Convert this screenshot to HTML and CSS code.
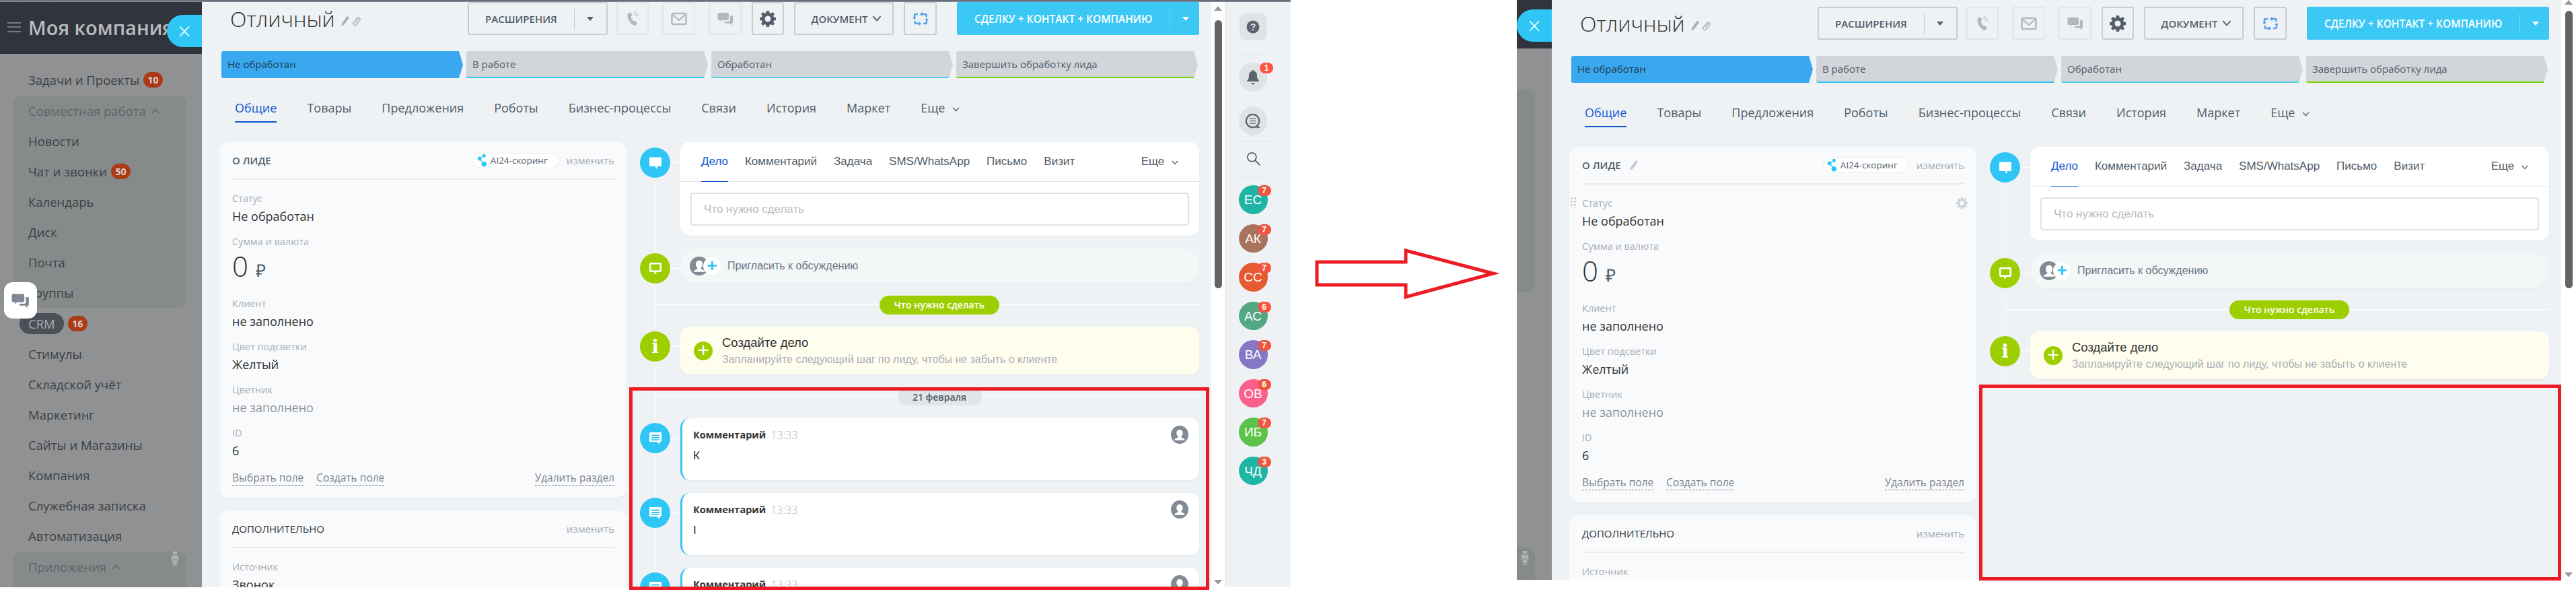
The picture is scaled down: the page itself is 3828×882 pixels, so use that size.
FILE: index.html
```html
<!DOCTYPE html>
<html lang="ru">
<head>
  <meta charset="UTF-8">
  <title>Лид: до и после</title>
  <link rel="stylesheet" href="styles.css">
</head>
<body>
  <svg class="sprite" xmlns="http://www.w3.org/2000/svg">
    <symbol id="i-phone" viewBox="0 0 24 24"><path d="M6 3.5l3-1.5 2.6 5-2 1.6c.3 2.6 1.9 5.4 4 7l2.3-.9 3.3 4.6-2.6 2c-1.700.9-3.600.2-5.100-1.100C7.700 16.800 4.800 12 4.300 7.400 4.100 5.800 4.700 4.300 6 3.500z"/><path d="M13 3.500a7 7 0 0 1 4.500 5M14 .8a10 10 0 0 1 6.300 7" fill="none" stroke="currentColor" stroke-width="1"/></symbol>
    <symbol id="i-mail" viewBox="0 0 24 20"><rect x="1.500" y="2" width="21" height="16" rx="2" fill="none" stroke="currentColor" stroke-width="2.400"/><path d="M3 4l9 8 9-8" fill="none" stroke="currentColor" stroke-width="2.200"/></symbol>
    <symbol id="i-chat" viewBox="0 0 24 24"><path d="M2 3h13a2 2 0 0 1 2 2v7a2 2 0 0 1-2 2H7l-2 3v-3H2a1.500 1.500 0 0 1-1.500-1.500v-8A1.500 1.500 0 0 1 2 3z"/><path d="M19 7h2.500A1.500 1.500 0 0 1 23 8.500V17a1.500 1.500 0 0 1-1.500 1.500H21V22l-3-3.500h-6a1.500 1.500 0 0 1-1.500-1.500v-1H17a2 2 0 0 0 2-2z"/></symbol>
    <symbol id="i-gear" viewBox="0 0 24 24"><path fill-rule="evenodd" d="M10 1h4l.6 3.100 1.900.8L19.200 3 22 5.800l-1.900 2.700.8 1.900L24 11v4l-3.100.6-.8 1.900 1.900 2.700-2.800 2.800-2.700-1.900-1.900.8L14 25h-4l-.6-3.100-1.900-.8L4.800 23 2 20.200l1.900-2.700-.8-1.900L0 15v-4l3.100-.6.8-1.900L2 5.800 4.800 3l2.700 1.900 1.900-.8zM12 8.500a4.500 4.500 0 1 0 0 9 4.500 4.500 0 0 0 0-9z" transform="translate(0 -1)"/></symbol>
    <symbol id="i-sync" viewBox="0 0 24 24"><path d="M3 10V6.500C3 5.500 3.500 5 4.500 5H8M21 14v3.500c0 1-.5 1.500-1.500 1.500H16M14 5h5c1 0 1.500.5 1.500 1.500V9M10 19H5c-1 0-1.500-.5-1.500-1.500V15" fill="none" stroke="currentColor" stroke-width="2.500"/><path d="M.5 10h5L3 13.500zM23.500 14h-5L21 10.500zM14.500 1.500v7L11 5zM9.500 22.500v-7L13 19z"/></symbol>
    <symbol id="i-pencil" viewBox="0 0 14 16"><path d="M10 1l3 2-8 11-3.500 1.500L2 12z"/></symbol>
    <symbol id="i-link" viewBox="0 0 14 16"><path d="M9.500 2.500l2 1.500c1 .8 1 2 .4 2.800l-5.500 7c-.8 1-2 1-2.800.4l-1-.8c-.8-.7-1-1.800-.3-2.700l5-6.500c.5-.6 1.200-.6 1.700-.2s.6 1.100.1 1.700l-4 5.200" fill="none" stroke="currentColor" stroke-width="1.300"/></symbol>
    <symbol id="i-chevron" viewBox="0 0 12 8"><path d="M1 1l5 5.500L11 1" fill="none" stroke="currentColor" stroke-width="1.600"/></symbol>
    <symbol id="i-bubble" viewBox="0 0 20 20"><path d="M2 1.500h16a1 1 0 0 1 1 1V14a1 1 0 0 1-1 1h-4.500L11 19l-1-4H2a1 1 0 0 1-1-1V2.500a1 1 0 0 1 1-1z"/></symbol>
    <symbol id="i-bubble-out" viewBox="0 0 20 20"><path fill-rule="evenodd" d="M3 1h14a2 2 0 0 1 2 2v10a2 2 0 0 1-2 2h-5l-3 4-1-4H3a2 2 0 0 1-2-2V3a2 2 0 0 1 2-2zm.5 2.500v9h13v-9z"/></symbol>
    <symbol id="i-comment" viewBox="0 0 20 20"><path fill-rule="evenodd" d="M2.500 1h15A1.500 1.500 0 0 1 19 2.500v11a1.500 1.500 0 0 1-1.500 1.500H16v4l-4-4H2.500A1.500 1.500 0 0 1 1 13.500v-11A1.500 1.500 0 0 1 2.500 1zM4 4.500V6.500h12v-2zM4 8v2h12V8zm0 3.200v1.800h12v-1.800z"/></symbol>
    <symbol id="i-person" viewBox="0 0 24 24"><path d="M12 5c2.800 0 4.300 2 4.300 4.800 0 2.200-1 3.700-2 4.500v1.300c2 .9 3.600 1.500 4.500 2.700.3.500.2 1-.2 1.200H5.400c-.4-.2-.5-.7-.2-1.200.9-1.200 2.500-1.800 4.500-2.700v-1.300c-1-.8-2-2.300-2-4.500C7.700 7 9.200 5 12 5z"/></symbol>
    <symbol id="i-bell" viewBox="0 0 20 24"><path d="M10 1c1 0 1.500.6 1.500 1.500 3 .8 4.500 3.200 4.500 6.500 0 4 1 6 3 8v1H1v-1c2-2 3-4 3-8 0-3.300 1.500-5.700 4.500-6.500C8.500 1.600 9 1 10 1zM7.500 20h5c0 1.500-1 2.500-2.500 2.500S7.500 21.500 7.500 20z"/></symbol>
    <symbol id="i-talk" viewBox="0 0 26 26"><circle cx="12.500" cy="12.500" r="10.500" fill="none" stroke="currentColor" stroke-width="2.400"/><path d="M20 20l5 3.500-6.500.5z"/><path d="M7.500 9h10M7.500 16.500h10M7.500 12.700h10" fill="none" stroke="currentColor" stroke-width="1.300"/></symbol>
    <symbol id="i-search" viewBox="0 0 24 24"><circle cx="9.500" cy="9.500" r="7.500" fill="none" stroke="currentColor" stroke-width="2"/><path d="M15 15l8 8" fill="none" stroke="currentColor" stroke-width="2.400"/></symbol>
    <symbol id="i-printer" viewBox="0 0 20 40"><rect x="4" y="0" width="12" height="8"/><path d="M2 11h16a2 2 0 0 1 2 2v14h-3v-5H3v5H0V13a2 2 0 0 1 2-2z"/><rect x="4" y="24" width="12" height="10"/><rect x="3" y="36" width="14" height="3"/></symbol>
    <symbol id="i-ai" viewBox="0 0 16 24"><circle cx="4" cy="9" r="3.500"/><circle cx="12" cy="4" r="3"/><circle cx="12" cy="19" r="4.500"/><path d="M4 9l8-5M4 9l8 10" stroke="currentColor" stroke-width="1.500"/></symbol>
  </svg>

  <div class="page">
    <div class="screen screen-full">
      <div class="strip"></div>
      <aside class="sidebar">
        <div class="side-head">
          <span class="burger"></span>
          <span class="side-title">Моя компания</span>
        </div>
        <nav class="side-nav">
          <div class="side-item">Задачи и Проекты <b class="side-badge">10</b></div>
          <div class="side-group">
            <div class="side-item side-item-dim">Совместная работа <svg class="caret-up"><use href="#i-chevron"/></svg></div>
            <div class="side-item">Новости</div>
            <div class="side-item">Чат и звонки <b class="side-badge">50</b></div>
            <div class="side-item">Календарь</div>
            <div class="side-item">Диск</div>
            <div class="side-item">Почта</div>
            <div class="side-item">Группы</div>
          </div>
          <div class="side-item side-item-crm"><span class="crm-pill">CRM</span> <b class="side-badge">16</b></div>
          <div class="side-item">Стимулы</div>
          <div class="side-item">Складской учёт</div>
          <div class="side-item">Маркетинг</div>
          <div class="side-item">Сайты и Магазины</div>
          <div class="side-item">Компания</div>
          <div class="side-item">Служебная записка</div>
          <div class="side-item">Автоматизация</div>
          <div class="side-group side-group-last">
            <div class="side-item side-item-dim">Приложения <svg class="caret-up"><use href="#i-chevron"/></svg></div>
            <svg class="printer"><use href="#i-printer"/></svg>
          </div>
        </nav>
      </aside>

      <main class="panel">
        <button class="close-tab">×</button>
        <div class="top-row">
          <div class="lead-title">Отличный <svg class="title-pencil"><use href="#i-pencil"/></svg><svg class="title-link"><use href="#i-link"/></svg></div>
          <div class="top-btn btn-ext">РАСШИРЕНИЯ<i class="btn-sep"></i><i class="tri"></i></div>
          <div class="top-btn btn-off btn-icon"><svg><use href="#i-phone"/></svg></div>
          <div class="top-btn btn-off btn-icon btn-mail"><svg><use href="#i-mail"/></svg></div>
          <div class="top-btn btn-off btn-icon btn-chat"><svg><use href="#i-chat"/></svg></div>
          <div class="top-btn btn-icon btn-gear"><svg><use href="#i-gear"/></svg></div>
          <div class="top-btn btn-doc">ДОКУМЕНТ <svg><use href="#i-chevron"/></svg></div>
          <div class="top-btn btn-icon btn-sync"><svg><use href="#i-sync"/></svg></div>
          <div class="btn-cta">СДЕЛКУ + КОНТАКТ + КОМПАНИЮ<i class="cta-sep"></i><i class="tri tri-white"></i></div>
        </div>

        <div class="stages">
          <div class="stage stage-active">Не обработан</div>
          <div class="stage stage-blue">В работе</div>
          <div class="stage stage-teal">Обработан</div>
          <div class="stage stage-green">Завершить обработку лида</div>
        </div>

        <div class="tabs">
          <span class="tab tab-active">Общие</span>
          <span class="tab">Товары</span>
          <span class="tab">Предложения</span>
          <span class="tab">Роботы</span>
          <span class="tab">Бизнес-процессы</span>
          <span class="tab">Связи</span>
          <span class="tab">История</span>
          <span class="tab">Маркет</span>
          <span class="tab">Еще <svg class="tab-chevron"><use href="#i-chevron"/></svg></span>
        </div>

        <div class="columns">
          <div class="fields">
            <section class="card">
              <header class="card-head">
                <span class="card-title">О ЛИДЕ</span>
                <span class="ai-chip"><svg><use href="#i-ai"/></svg>AI24-скоринг</span>
                <span class="card-edit">изменить</span>
              </header>
              <div class="field field-first"><label>Статус</label><div class="value">Не обработан</div></div>
              <div class="field"><label>Сумма и валюта</label><div class="value-big">0 <span class="rub">₽</span></div></div>
              <div class="field"><label>Клиент</label><div class="value">не заполнено</div></div>
              <div class="field"><label>Цвет подсветки</label><div class="value">Желтый</div></div>
              <div class="field"><label>Цветник</label><div class="value value-empty">не заполнено</div></div>
              <div class="field"><label>ID</label><div class="value">6</div></div>
              <div class="card-links">
                <span class="dash-link">Выбрать поле</span>
                <span class="dash-link">Создать поле</span>
                <span class="dash-link dash-right">Удалить раздел</span>
              </div>
            </section>
            <section class="card card-extra">
              <header class="card-head">
                <span class="card-title card-title-low">ДОПОЛНИТЕЛЬНО</span>
                <span class="card-edit">изменить</span>
              </header>
              <div class="field field-first"><label>Источник</label><div class="value">Звонок</div></div>
            </section>
          </div>

          <div class="timeline">
            <div class="tl-row">
              <span class="tl-icon tl-blue tl-icon-first"><svg><use href="#i-bubble"/></svg></span>
              <div class="tl-card editor">
                <div class="editor-tabs">
                  <span class="etab etab-active">Дело</span>
                  <span class="etab">Комментарий</span>
                  <span class="etab">Задача</span>
                  <span class="etab">SMS/WhatsApp</span>
                  <span class="etab">Письмо</span>
                  <span class="etab">Визит</span>
                  <span class="etab etab-more">Еще <svg><use href="#i-chevron"/></svg></span>
                </div>
                <div class="editor-input">Что нужно сделать</div>
              </div>
            </div>
            <div class="tl-row">
              <span class="tl-icon tl-green"><svg><use href="#i-bubble-out"/></svg></span>
              <div class="invite">
                <span class="invite-user"><svg><use href="#i-person"/></svg></span><span class="invite-plus">+</span>
                Пригласить к обсуждению
              </div>
            </div>
            <div class="tl-sep tl-sep-todo"><span class="sep-pill pill-green">Что нужно сделать</span></div>
            <div class="tl-row">
              <span class="tl-icon tl-green tl-info">i</span>
              <div class="create">
                <span class="create-plus">+</span>
                <div>
                  <div class="create-title">Создайте дело</div>
                  <div class="create-sub">Запланируйте следующий шаг по лиду, чтобы не забыть о клиенте</div>
                </div>
              </div>
            </div>
            <div class="tl-sep tl-sep-date"><span class="sep-pill pill-date">21 февраля</span></div>
            <div class="tl-row">
              <span class="tl-icon tl-blue"><svg><use href="#i-comment"/></svg></span>
              <div class="comment">
                <div class="comment-head"><b>Комментарий</b> <span class="comment-time">13:33</span><span class="comment-user"><svg><use href="#i-person"/></svg></span></div>
                <div class="comment-text">К</div>
              </div>
            </div>
            <div class="tl-row">
              <span class="tl-icon tl-blue"><svg><use href="#i-comment"/></svg></span>
              <div class="comment">
                <div class="comment-head"><b>Комментарий</b> <span class="comment-time">13:33</span><span class="comment-user"><svg><use href="#i-person"/></svg></span></div>
                <div class="comment-text">I</div>
              </div>
            </div>
            <div class="tl-row">
              <span class="tl-icon tl-blue"><svg><use href="#i-comment"/></svg></span>
              <div class="comment">
                <div class="comment-head"><b>Комментарий</b> <span class="comment-time">13:33</span><span class="comment-user"><svg><use href="#i-person"/></svg></span></div>
                <div class="comment-text">К</div>
              </div>
            </div>
          </div>
        </div>
      </main>

      <div class="scroll scroll-a">
        <i class="arrow-up"></i>
        <i class="thumb"></i>
        <i class="arrow-down"></i>
      </div>

      <aside class="rightbar">
        <div class="rb-help"><svg viewBox="0 0 20 20"><circle cx="10" cy="10" r="9.500" fill="#5c6470"/><text x="10" y="15" text-anchor="middle" class="rb-q">?</text></svg></div>
        <hr class="rb-line">
        <div class="rb-round"><svg class="rb-bell"><use href="#i-bell"/></svg><b class="rb-badge">1</b></div>
        <div class="rb-round rb-round-2"><svg class="rb-talk"><use href="#i-talk"/></svg></div>
        <hr class="rb-line rb-line-2">
        <svg class="rb-search"><use href="#i-search"/></svg>
        <hr class="rb-line rb-line-3">
        <div class="avatars">
          <div class="avatar av-1">ЕС<b>7</b></div>
          <div class="avatar av-2">АК<b>7</b></div>
          <div class="avatar av-3">СС<b>7</b></div>
          <div class="avatar av-4">АС<b>6</b></div>
          <div class="avatar av-5">ВА<b>7</b></div>
          <div class="avatar av-6">ОВ<b>6</b></div>
          <div class="avatar av-7">ИБ<b>7</b></div>
          <div class="avatar av-8">ЧД<b>3</b></div>
        </div>
      </aside>
      <div class="chat-fab"><svg><use href="#i-chat"/></svg></div>
    </div>

    <div class="arrow-gap">
      <svg width="336" height="882" viewBox="0 0 336 882"><polygon points="39,389 171,389 171,372 301,406 171,441 171,423 39,423" fill="#fff" stroke="#ed1c24" stroke-width="5"/></svg>
    </div>

    <div class="screen screen-short">
      <aside class="sidebar sidebar-mini">
        <div class="side-head"></div>
        <div class="mini-group"></div>
        <div class="mini-group mini-group-last"><svg class="printer"><use href="#i-printer"/></svg></div>
      </aside>

      <main class="panel">
        <button class="close-tab">×</button>
        <div class="top-row">
          <div class="lead-title">Отличный <svg class="title-pencil"><use href="#i-pencil"/></svg><svg class="title-link"><use href="#i-link"/></svg></div>
          <div class="top-btn btn-ext">РАСШИРЕНИЯ<i class="btn-sep"></i><i class="tri"></i></div>
          <div class="top-btn btn-off btn-icon"><svg><use href="#i-phone"/></svg></div>
          <div class="top-btn btn-off btn-icon btn-mail"><svg><use href="#i-mail"/></svg></div>
          <div class="top-btn btn-off btn-icon btn-chat"><svg><use href="#i-chat"/></svg></div>
          <div class="top-btn btn-icon btn-gear"><svg><use href="#i-gear"/></svg></div>
          <div class="top-btn btn-doc">ДОКУМЕНТ <svg><use href="#i-chevron"/></svg></div>
          <div class="top-btn btn-icon btn-sync"><svg><use href="#i-sync"/></svg></div>
          <div class="btn-cta">СДЕЛКУ + КОНТАКТ + КОМПАНИЮ<i class="cta-sep"></i><i class="tri tri-white"></i></div>
        </div>

        <div class="stages">
          <div class="stage stage-active">Не обработан</div>
          <div class="stage stage-blue">В работе</div>
          <div class="stage stage-teal">Обработан</div>
          <div class="stage stage-green">Завершить обработку лида</div>
        </div>

        <div class="tabs">
          <span class="tab tab-active">Общие</span>
          <span class="tab">Товары</span>
          <span class="tab">Предложения</span>
          <span class="tab">Роботы</span>
          <span class="tab">Бизнес-процессы</span>
          <span class="tab">Связи</span>
          <span class="tab">История</span>
          <span class="tab">Маркет</span>
          <span class="tab">Еще <svg class="tab-chevron"><use href="#i-chevron"/></svg></span>
        </div>

        <div class="columns">
          <div class="fields">
            <section class="card">
              <header class="card-head">
                <span class="card-title">О ЛИДЕ</span>
                <svg class="head-pencil"><use href="#i-pencil"/></svg>
                <span class="ai-chip"><svg><use href="#i-ai"/></svg>AI24-скоринг</span>
                <span class="card-edit">изменить</span>
              </header>
              <div class="field field-first field-hover"><i class="drag-dots"></i><svg class="field-gear"><use href="#i-gear"/></svg><label>Статус</label><div class="value">Не обработан</div></div>
              <div class="field"><label>Сумма и валюта</label><div class="value-big">0 <span class="rub">₽</span></div></div>
              <div class="field"><label>Клиент</label><div class="value">не заполнено</div></div>
              <div class="field"><label>Цвет подсветки</label><div class="value">Желтый</div></div>
              <div class="field"><label>Цветник</label><div class="value value-empty">не заполнено</div></div>
              <div class="field"><label>ID</label><div class="value">6</div></div>
              <div class="card-links">
                <span class="dash-link">Выбрать поле</span>
                <span class="dash-link">Создать поле</span>
                <span class="dash-link dash-right">Удалить раздел</span>
              </div>
            </section>
            <section class="card card-extra">
              <header class="card-head">
                <span class="card-title card-title-low">ДОПОЛНИТЕЛЬНО</span>
                <span class="card-edit">изменить</span>
              </header>
              <div class="field field-first"><label>Источник</label><div class="value">Звонок</div></div>
            </section>
          </div>

          <div class="timeline">
            <div class="tl-row">
              <span class="tl-icon tl-blue tl-icon-first"><svg><use href="#i-bubble"/></svg></span>
              <div class="tl-card editor">
                <div class="editor-tabs">
                  <span class="etab etab-active">Дело</span>
                  <span class="etab">Комментарий</span>
                  <span class="etab">Задача</span>
                  <span class="etab">SMS/WhatsApp</span>
                  <span class="etab">Письмо</span>
                  <span class="etab">Визит</span>
                  <span class="etab etab-more">Еще <svg><use href="#i-chevron"/></svg></span>
                </div>
                <div class="editor-input">Что нужно сделать</div>
              </div>
            </div>
            <div class="tl-row">
              <span class="tl-icon tl-green"><svg><use href="#i-bubble-out"/></svg></span>
              <div class="invite">
                <span class="invite-user"><svg><use href="#i-person"/></svg></span><span class="invite-plus">+</span>
                Пригласить к обсуждению
              </div>
            </div>
            <div class="tl-sep tl-sep-todo"><span class="sep-pill pill-green">Что нужно сделать</span></div>
            <div class="tl-row">
              <span class="tl-icon tl-green tl-info">i</span>
              <div class="create">
                <span class="create-plus">+</span>
                <div>
                  <div class="create-title">Создайте дело</div>
                  <div class="create-sub">Запланируйте следующий шаг по лиду, чтобы не забыть о клиенте</div>
                </div>
              </div>
            </div>
          </div>
        </div>
      </main>

      <div class="scroll scroll-b">
        <i class="arrow-up"></i>
        <i class="thumb"></i>
        <i class="arrow-down"></i>
      </div>
    </div>

    <div class="red-box red-box-a"></div>
    <div class="red-box red-box-b"></div>
  </div>
</body>
</html>
```

FILE: styles.css
```css
* {
  box-sizing: border-box;
}

html, body {
  margin: 0;
  background-color: #fff;
  overflow: hidden;
}

body {
  font-family: "Open Sans", sans-serif;
  color: #333;
}

.sprite {
  position: absolute;
  width: 0;
  height: 0;
}

svg {
  display: inline-block;
  fill: currentColor;
}

.page {
  position: relative;
  display: flex;
  width: 3828px;
  height: 882px;
}

.screen {
  position: relative;
  display: flex;
  flex: none;
  overflow: hidden;
}

.screen-full {
  width: 1918px;
  height: 872px;
}

.screen-short {
  width: 1574px;
  height: 861px;
}

.strip {
  position: absolute;
  z-index: 5;
  top: 0;
  left: 0;
  width: 100%;
  height: 3px;
  background: linear-gradient(#5a626e, #8e949c);
}

.arrow-gap {
  flex: none;
  width: 336px;
}

/* левое меню */
.sidebar {
  flex: none;
  width: 300px;
  background-color: #8f9193;
  color: #3d4146;
  font-size: 18.500px;
}

.sidebar-mini {
  width: 52px;
}

.side-head {
  display: flex;
  align-items: center;
  height: 80px;
  padding-left: 11px;
  background-color: #30343c;
  white-space: nowrap;
  overflow: hidden;
}

.sidebar-mini .side-head {
  height: 72px;
}

.burger {
  flex: none;
  width: 20px;
  height: 15px;
  border-top: 2px solid #777b80;
  border-bottom: 2px solid #777b80;
  background: linear-gradient(#777b80, #777b80) center / 100% 2px no-repeat;
}

.side-title {
  margin-left: 11px;
  color: #b9bbbe;
  font-size: 29px;
  font-weight: 600;
}

.side-nav {
  padding-top: 16px;
}

.side-item {
  display: flex;
  align-items: center;
  gap: 6px;
  height: 45px;
  padding-left: 42px;
  white-space: nowrap;
}

.side-item-dim {
  color: #5f6468;
}

.side-group {
  position: relative;
  margin: 1px 24px 1px 20px;
  background-color: #878a8b;
  border-radius: 12px;
}

.side-group .side-item {
  padding-left: 22px;
}

.side-group-last {
  height: 80px;
  margin-bottom: 0;
}

.side-item-crm {
  padding-left: 29px;
}

.crm-pill {
  display: inline-block;
  padding: 0 13px;
  line-height: 31px;
  background-color: #4c5159;
  border-radius: 16px;
  color: #a8abaf;
}

.side-badge {
  display: inline-block;
  min-width: 29px;
  padding: 0 4px;
  line-height: 23px;
  background-color: #ab3a17;
  border-radius: 12px;
  color: #d8d0cc;
  font-size: 14px;
  text-align: center;
}

.caret-up {
  width: 12px;
  height: 8px;
  margin-left: 2px;
  transform: rotate(180deg);
}

.printer {
  position: absolute;
  top: 0;
  right: 6px;
  width: 20px;
  height: 21px;
  color: #b0b2b4;
}

.mini-group {
  width: 27px;
  height: 300px;
  margin-top: 62px;
  background-color: #878a8b;
  border-radius: 0 12px 12px 0;
}

.mini-group-last {
  position: relative;
  height: 60px;
  margin-top: 378px;
}

.mini-group .printer {
  top: 6px;
  right: auto;
  left: 2px;
}

.chat-fab {
  position: absolute;
  top: 419px;
  left: 6px;
  width: 49px;
  height: 54px;
  padding: 14px 11px;
  background-color: #fff;
  border-radius: 13px;
  color: #7e8792;
}

.chat-fab svg {
  width: 27px;
  height: 27px;
}

/* карточка лида */
.panel {
  position: relative;
  flex: none;
  width: 1500px;
  background-color: #eef2f4;
}

.screen-full .panel {
  padding-top: 3px;
}

.screen-short .panel {
  padding-top: 10px;
}

.close-tab {
  position: absolute;
  left: -52px;
  width: 52px;
  height: 48px;
  padding: 0;
  border: none;
  border-radius: 24px 0 0 24px;
  background-color: #2fc6f6;
  color: #fff;
  font-family: "Open Sans", sans-serif;
  font-size: 34px;
  font-weight: 300;
  line-height: 48px;
}

.screen-full .close-tab {
  top: 22px;
}

.screen-short .close-tab {
  top: 14px;
}

.top-row {
  display: flex;
  align-items: stretch;
  height: 49px;
  padding: 0 18px 0 42px;
}

.lead-title {
  display: flex;
  align-items: center;
  height: 49px;
  margin-right: auto;
  color: #333;
  font-size: 32px;
  font-weight: 300;
  white-space: pre;
}

.title-pencil {
  width: 14px;
  height: 16px;
  margin: 6px 3px 0 0;
  color: #a8adb4;
}

.title-link {
  width: 14px;
  height: 16px;
  margin-top: 6px;
  color: #a8adb4;
}

.top-btn {
  display: flex;
  align-items: center;
  justify-content: center;
  margin-left: 15px;
  background-color: transparent;
  border: 2px solid #c9cdd2;
  border-radius: 3px;
  color: #535c69;
  font-size: 15px;
  font-weight: 600;
}

.btn-ext {
  width: 208px;
  margin-left: 0;
  justify-content: flex-start;
  padding-left: 24px;
}

.btn-sep {
  width: 1px;
  height: 30px;
  margin: 0 18px 0 25px;
  background-color: #c4c8cd;
}

.tri {
  width: 0;
  height: 0;
  border-left: 5px solid transparent;
  border-right: 5px solid transparent;
  border-top: 6px solid #535c69;
}

.tri-white {
  border-top-color: #fff;
}

.btn-icon {
  width: 48px;
}

.btn-icon svg {
  width: 24px;
  height: 24px;
}

.btn-off {
  margin-left: 13px;
  border-color: #e2e6e9;
  color: #b4b8bd;
}

.btn-mail {
  width: 49px;
  margin-left: 20px;
}

.btn-chat {
  width: 49px;
  margin-left: 20px;
}

.btn-sync {
  width: 49px;
  color: #5aa0ec;
}

.btn-doc {
  width: 148px;
  padding-left: 8px;
  gap: 7px;
}

.btn-doc svg {
  width: 14px;
  height: 9px;
}

.btn-cta {
  display: flex;
  align-items: center;
  width: 360px;
  margin-left: 30px;
  padding-left: 26px;
  background-color: #3bc8f5;
  border-radius: 3px;
  color: #fff;
  font-size: 15.500px;
  font-weight: 600;
  white-space: nowrap;
}

.cta-sep {
  width: 1px;
  height: 30px;
  margin: 0 18px 0 25px;
  background-color: rgba(255, 255, 255, .3);
}

.stages {
  display: flex;
  gap: 5px;
  height: 40px;
  margin: 24px 0 0 29px;
  width: 1451px;
}

.stage {
  flex: 1;
  padding-left: 9px;
  background-color: #d2d5da;
  border-bottom: 2px solid #2fc6f6;
  border-radius: 3px;
  clip-path: polygon(0 0, calc(100% - 6px) 0, 100% 50%, calc(100% - 6px) 100%, 0 100%);
  color: #535c69;
  font-size: 15px;
  line-height: 38px;
}

.stage-active {
  background-color: #39a8ef;
  border-bottom-color: #39a8ef;
  color: #1f3a52;
}

.stage-teal {
  border-bottom-color: #55d0e0;
}

.stage-green {
  border-bottom-color: #7bd500;
}

.tabs {
  display: flex;
  gap: 45px;
  height: 36px;
  margin: 30px 0 0 49px;
}

.tab {
  height: 36px;
  color: #535c69;
  font-size: 18px;
  line-height: 28px;
  white-space: nowrap;
}

.tab-active {
  border-bottom: 2px solid #1058d0;
  color: #1058d0;
}

.tab-chevron {
  width: 11px;
  height: 7px;
  margin-left: 6px;
  vertical-align: 1px;
}

.columns {
  display: flex;
  margin-top: 29px;
  padding: 0 18px 0 26px;
}

.fields {
  flex: none;
  width: 605px;
}

.card {
  padding: 0 18px 18px 19px;
  background-color: #f8fafc;
  border-radius: 14px;
  box-shadow: 0 1px 2px rgba(0, 0, 0, .05);
}

.card-extra {
  margin-top: 19px;
}

.card-head {
  display: flex;
  align-items: center;
  height: 56px;
  border-bottom: 2px solid #e8ebee;
}

.card-title {
  color: #535c69;
  font-size: 15px;
  font-weight: 600;
}

.card-title-low {
  font-size: 15px;
  font-weight: 400;
  color: #333;
}

.head-pencil {
  width: 14px;
  height: 16px;
  margin-left: 12px;
  color: #c2c6cb;
}

.ai-chip {
  display: flex;
  align-items: center;
  gap: 6px;
  width: 128px;
  height: 23px;
  margin-left: auto;
  padding-left: 5px;
  background-color: #fff;
  border: 1px solid #e8ebee;
  border-radius: 12px;
  color: #535c69;
  font-size: 13.500px;
  white-space: nowrap;
}

.ai-chip svg {
  width: 14px;
  height: 20px;
  color: #2fc6f6;
}

.ai-chip + .card-edit {
  margin-left: 11px;
}

.card-edit {
  margin-left: auto;
  color: #a8adb4;
  font-size: 15px;
}

.field {
  position: relative;
  margin-top: 16px;
}

.field-first {
  margin-top: 18px;
}

.field label {
  display: block;
  color: #a8adb4;
  font-size: 14.500px;
  line-height: 20px;
}

.value {
  margin-top: 4px;
  color: #333;
  font-size: 18px;
  line-height: 24px;
}

.value-empty {
  color: #8f959c;
}

.value-big {
  margin-top: 2px;
  color: #333;
  font-size: 42px;
  font-weight: 300;
  line-height: 48px;
}

.rub {
  font-size: 26px;
  font-weight: 400;
  color: #535c69;
}

.drag-dots {
  position: absolute;
  top: 0;
  left: -18px;
  width: 10px;
  height: 17px;
  background: radial-gradient(circle, #c4c8cd 1.300px, transparent 1.500px) 0 0 / 5px 5px;
}

.field-gear {
  position: absolute;
  top: 1px;
  right: -5px;
  width: 17px;
  height: 17px;
  color: #d0d3d7;
}

.card-links {
  display: flex;
  gap: 19px;
  margin-top: 17px;
  line-height: 22px;
}

.dash-link {
  border-bottom: 1px dashed #7d858e;
  color: #7d858e;
  font-size: 15.500px;
}

.dash-right {
  margin-left: auto;
}

/* лента */
.timeline {
  position: relative;
  flex: 1;
  margin-left: 20px;
}

.timeline::before {
  content: "";
  position: absolute;
  top: 20px;
  bottom: -400px;
  left: 22px;
  width: 1px;
  background-color: #fff;
}

.tl-row {
  position: relative;
  display: flex;
  align-items: flex-start;
  gap: 15px;
  margin-top: 19px;
  font-family: "Liberation Sans", sans-serif;
}

.tl-row:first-child {
  margin-top: 0;
}

.tl-icon {
  position: relative;
  flex: none;
  display: flex;
  align-items: center;
  justify-content: center;
  width: 45px;
  height: 45px;
  margin-top: 7px;
  border-radius: 50%;
  color: #fff;
}

.tl-icon-first {
  margin-top: 8px;
}

.tl-icon::after {
  content: "";
  position: absolute;
  top: 22px;
  left: 45px;
  width: 15px;
  height: 1px;
  background-color: #fff;
}

.tl-icon svg {
  width: 20px;
  height: 20px;
}

.tl-blue {
  background-color: #2fc6f6;
}

.tl-green {
  background-color: #9dcf00;
}

.tl-info {
  font-family: "DejaVu Serif", serif;
  font-size: 28px;
  font-weight: 700;
}

.tl-card {
  flex: 1;
  background-color: #fff;
  border-radius: 14px;
  box-shadow: 0 1px 2px rgba(0, 0, 0, .05);
}

.editor {
  height: 139px;
}

.editor-tabs {
  display: flex;
  gap: 25px;
  height: 59px;
  padding: 0 31px;
  border-bottom: 1px solid #e2e5e8;
}

.etab {
  height: 59px;
  color: #535c69;
  font-size: 17px;
  line-height: 58px;
  white-space: nowrap;
}

.etab-active {
  border-bottom: 1px solid #1058d0;
  color: #1058d0;
}

.etab-more {
  margin-left: auto;
}

.etab-more svg {
  width: 10px;
  height: 7px;
  margin-left: 6px;
}

.editor-input {
  height: 49px;
  margin: 16px 15px 0;
  padding-left: 18px;
  background-color: #fff;
  border: 2px solid #dfe1e4;
  border-radius: 4px;
  color: #b9bdc2;
  font-size: 17px;
  line-height: 45px;
}

.invite {
  flex: 1;
  display: flex;
  align-items: center;
  height: 52px;
  padding-left: 14px;
  background-color: #f4f7f8;
  border-radius: 26px;
  box-shadow: 0 1px 2px rgba(0, 0, 0, .04);
  color: #6a737e;
  font-size: 16px;
}

.invite-user {
  width: 28px;
  height: 28px;
  background-color: #828b95;
  border-radius: 50%;
  color: #fff;
  overflow: hidden;
}

.invite-user svg,
.comment-user svg {
  display: block;
  width: 100%;
  height: 100%;
}

.invite-plus {
  width: 26px;
  height: 26px;
  margin: 0 10px 0 -8px;
  background-color: #fff;
  border-radius: 50%;
  color: #2fc6f6;
  font-size: 26px;
  font-weight: 700;
  line-height: 24px;
  text-align: center;
}

.tl-sep {
  position: relative;
  display: flex;
  justify-content: center;
  margin-left: 22px;
}

.tl-sep::before {
  content: "";
  position: absolute;
  top: 13px;
  left: 0;
  right: 0;
  height: 1px;
  background-color: #fff;
}

.tl-sep-todo {
  height: 28px;
  margin-top: 18px;
  margin-bottom: -1px;
  padding-left: 37px;
}

.tl-sep-date {
  height: 25px;
  margin-top: 21px;
  padding-left: 37px;
}

.tl-sep-date::before {
  top: 10px;
}

.sep-pill {
  position: relative;
  padding: 0 18px;
  border-radius: 14px;
  font-size: 14px;
  font-weight: 600;
}

.pill-green {
  width: 178px;
  background-color: #9dcf00;
  color: #fff;
  line-height: 28px;
  text-align: center;
}

.pill-date {
  width: 125px;
  background-color: #dfe5e8;
  color: #535c69;
  line-height: 25px;
  text-align: center;
}

.create {
  flex: 1;
  display: flex;
  align-items: center;
  height: 71px;
  padding-left: 20px;
  background-color: #fffeee;
  border-radius: 14px;
  box-shadow: 0 1px 2px rgba(0, 0, 0, .05);
}

.create-plus {
  flex: none;
  width: 28px;
  height: 28px;
  margin-right: 14px;
  background-color: #9dcf00;
  border-radius: 50%;
  color: #fff;
  font-size: 30px;
  line-height: 26px;
  text-align: center;
}

.create-title {
  color: #333;
  font-size: 18.500px;
}

.create-sub {
  margin-top: 5px;
  color: #a8adb4;
  font-size: 16px;
}

.comment {
  flex: 1;
  height: 92px;
  padding: 12px 16px;
  background-color: #fff;
  border-left: 3px solid #2fc6f6;
  border-radius: 14px;
  box-shadow: 0 1px 2px rgba(0, 0, 0, .05);
}

.comment-head {
  display: flex;
  align-items: center;
  gap: 7px;
  height: 25px;
  font-family: "Open Sans", sans-serif;
  font-size: 14.500px;
}

.comment-time {
  color: #b1b6bc;
  font-size: 16px;
  font-weight: 300;
}

.comment-user {
  width: 26px;
  height: 27px;
  margin-left: auto;
  background-color: #828b95;
  border-radius: 50%;
  color: #fff;
  overflow: hidden;
}

.comment-text {
  margin-top: 9px;
  font-size: 17px;
}

/* полоса прокрутки */
.scroll {
  flex: none;
  display: flex;
  flex-direction: column;
  align-items: center;
  position: relative;
  background-color: #fff;
}

.scroll-a {
  width: 20px;
  padding-top: 9px;
}

.scroll-b {
  width: 22px;
  padding-top: 0;
}

.arrow-up,
.arrow-down {
  width: 0;
  height: 0;
  border-left: 6.500px solid transparent;
  border-right: 6.500px solid transparent;
}

.arrow-up {
  border-bottom: 7px solid #999;
}

.arrow-down {
  position: absolute;
  bottom: 4px;
  border-top: 7px solid #999;
}

.thumb {
  width: 11px;
  height: 398px;
  margin-top: 14px;
  background-color: #646464;
  border-radius: 6px;
}

.scroll-b .thumb {
  height: 412px;
  margin-top: 9px;
}

/* правая панель */
.rightbar {
  flex: none;
  display: flex;
  flex-direction: column;
  align-items: center;
  width: 98px;
  padding: 20px 15px 0 0;
  background-color: #eef2f4;
  border-left: 1px solid #dfe5ec;
}

.rb-help {
  width: 40px;
  height: 40px;
  padding: 10px;
  background-color: #dfe3e6;
  border-radius: 8px;
}

.rb-help svg {
  width: 20px;
  height: 20px;
  display: block;
}

.rb-q {
  fill: #dfe3e6;
  font-family: "Liberation Sans", sans-serif;
  font-size: 14px;
  font-weight: 700;
}

.rb-line {
  width: 53px;
  height: 1px;
  margin: 20px 0 12px;
  border: none;
  background-color: #e0e5e8;
}

.rb-line-2 {
  margin: 9px 0 14px;
}

.rb-line-3 {
  margin: 15px 0 13px;
}

.rb-round {
  position: relative;
  display: flex;
  align-items: center;
  justify-content: center;
  width: 42px;
  height: 43px;
  background-color: #dfe3e6;
  border-radius: 50%;
  color: #5c6470;
}

.rb-round-2 {
  margin-top: 22px;
}

.rb-bell {
  width: 20px;
  height: 24px;
}

.rb-talk {
  width: 24px;
  height: 24px;
}

.rb-search {
  width: 21px;
  height: 21px;
  color: #5c6470;
}

.rb-badge {
  position: absolute;
  top: 0;
  right: -9px;
  width: 20px;
  height: 16px;
  background-color: #ff5440;
  border-radius: 8px;
  color: #fff;
  font-family: "Liberation Sans", sans-serif;
  font-size: 12px;
  line-height: 16px;
  text-align: center;
}

.avatars {
  display: flex;
  flex-direction: column;
  gap: 15px;
}

.avatar {
  position: relative;
  width: 43px;
  height: 42.500px;
  background-color: #1fb5a4;
  border-radius: 50%;
  color: #fff;
  font-family: "Liberation Sans", sans-serif;
  font-size: 19px;
  line-height: 43px;
  text-align: center;
}

.avatar b {
  position: absolute;
  top: 0;
  right: -5px;
  width: 20px;
  height: 16px;
  background-color: #f0553f;
  border-radius: 8px;
  font-size: 12px;
  line-height: 16px;
}

.av-2 { background-color: #a9735e; }
.av-3 { background-color: #e65a32; }
.av-4 { background-color: #52a882; }
.av-5 { background-color: #8677c4; }
.av-6 { background-color: #f9618a; }
.av-7 { background-color: #5cc24a; }
.av-8 { background-color: #1fb5a4; }

/* красные рамки поверх скриншотов */
.red-box {
  position: absolute;
  z-index: 10;
  border: 5px solid #ed1c24;
}

.red-box-a {
  top: 575px;
  left: 935px;
  width: 862px;
  height: 301px;
}

.red-box-b {
  top: 571px;
  left: 2941px;
  width: 865px;
  height: 291px;
  background-color: #eef2f4;
}
```
